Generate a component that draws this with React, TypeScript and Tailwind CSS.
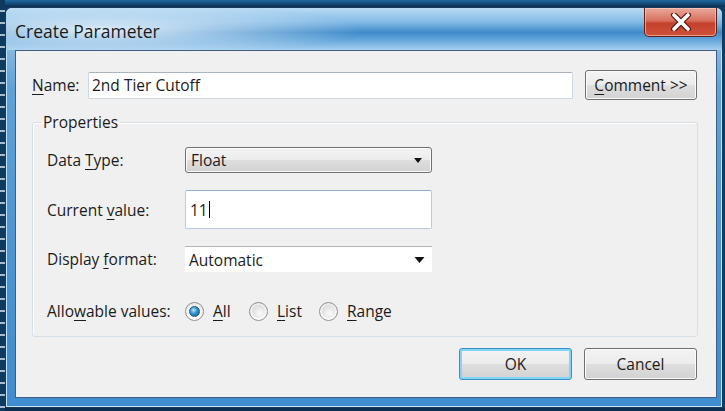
import React from "react";

// ─── Small pieces ──────────────────────────────────────────────────────────────

function U({ children }: { children: React.ReactNode }) {
  return <span className="underline decoration-1 underline-offset-[3px]">{children}</span>;
}

const btn =
  "rounded-[3px] border border-[#707070] bg-[linear-gradient(to_bottom,#f3f3f3_0%,#ececec_48%,#dedede_52%,#d2d2d2_100%)] shadow-[inset_0_0_0_1px_#fbfbfb]";

function Radio({ checked }: { checked?: boolean }) {
  return (
    <span className="w-[19px] h-[19px] rounded-full border border-[#8f9191] bg-[linear-gradient(to_bottom,#e9e9e9,#fefefe)] flex items-center justify-center shrink-0">
      {checked ? (
        <span className="w-[11px] h-[11px] rounded-full border border-[#1f5a85] bg-[radial-gradient(circle_at_40%_35%,#bfe7fb_0%,#3d9bd6_40%,#0b4a7c_100%)]" />
      ) : (
        <span className="w-[13px] h-[13px] rounded-full bg-[radial-gradient(circle_at_60%_65%,#fbfbfb_0%,#dedede_70%,#cfcfcf_100%)]" />
      )}
    </span>
  );
}

function CaretDown({ w = 8, h = 5 }: { w?: number; h?: number }) {
  return (
    <svg width={w} height={h} viewBox="0 0 10 6">
      <polygon points="0,0 10,0 5,6" fill="#111" />
    </svg>
  );
}

function CloseGlyph() {
  return (
    <svg width="22" height="18" viewBox="0 0 22 18">
      <path d="M4 2 L18 16 M18 2 L4 16" stroke="#5a1a12" strokeWidth="6" strokeLinecap="round" />
      <path d="M4 2 L18 16 M18 2 L4 16" stroke="#ffffff" strokeWidth="3.6" strokeLinecap="round" />
    </svg>
  );
}

// ─── Main ──────────────────────────────────────────────────────────────────────

export default function App() {
  return (
    <div className="w-[725px] h-[411px] overflow-hidden flex bg-[#0f3c63] text-[#1b1b1b] font-['Open_Sans','Liberation_Sans',sans-serif]">
      {/* desktop edge behind the window */}
      <div className="w-[5px] h-full bg-[repeating-linear-gradient(to_bottom,#0e3a60_0px,#0e3a60_10px,#a9bccd_10px,#a9bccd_12px)]" />

      <div className="flex flex-col">
        <div className="h-[7px] w-[720px] bg-[linear-gradient(to_bottom,#1d6aa1,#0c2e50)]" />

        {/* ── Window ── */}
        <div className="w-[718px] h-[401px] rounded-t-[7px] border border-[#17395a] bg-[linear-gradient(to_bottom,#a9cfee,#5fa2d9_20%,#4b95d3_60%,#3f8dcf_100%)] shadow-[inset_0_0_0_1px_#c9e2f6] flex flex-col">
          {/* Title bar */}
          <div className="h-[42px] flex items-start rounded-t-[6px] bg-[radial-gradient(ellipse_260px_26px_at_95px_22px,rgba(228,240,250,0.97),rgba(228,240,250,0)),linear-gradient(to_bottom,#b9dbf4,#86bce6_32%,#3f8bca_58%,#5ea3d9_74%,#a7cfef)]">
            <span className="pl-[9px] pt-[12px] text-[17.5px] leading-[23px] text-[#1a1a1a]">Create Parameter</span>
            <div className="ml-auto mr-[5px] w-[73px] h-[29px] rounded-b-[5px] border border-t-0 border-[#5e1f17] bg-[linear-gradient(to_bottom,#e9a99c_0%,#d7705e_45%,#c4412c_55%,#d0523a_100%)] shadow-[inset_0_0_0_1px_rgba(255,210,200,0.6)] flex items-center justify-center">
              <CloseGlyph />
            </div>
          </div>

          {/* Client area */}
          <div className="ml-[9px] w-[702px] h-[348px] border border-[#3e5f7f] bg-[#f0f0f0] text-[15.5px] leading-[20px]">
            {/* Name row */}
            <div className="mt-[19px] h-[30px] pl-[16px] flex items-center">
              <span className="w-[56px]">
                <U>N</U>ame:
              </span>
              <div className="w-[485px] h-[27px] rounded-[2px] border border-[#cfd8e0] border-t-[#abb4bd] bg-white pl-[3px] flex items-center">
                2nd Tier Cutoff
              </div>
              <div className={`ml-[12px] w-[112px] h-[30px] flex items-center justify-center ${btn}`}>
                <U>C</U>omment &gt;&gt;
              </div>
            </div>

            {/* Properties group */}
            <fieldset className="mt-[12px] ml-[16px] w-[666px] rounded-[3px] border border-[#d5dfe5] shadow-[inset_1px_1px_0_#ffffff] px-0 pb-[12px]">
              <legend className="ml-[8px] px-[2px] leading-[20px]">Properties</legend>

              <div className="pl-[14px] flex flex-col">
                <div className="mt-[15px] h-[26px] flex items-center">
                  <span className="w-[138px]">
                    Data <U>T</U>ype:
                  </span>
                  <div className={`w-[247px] h-[26px] pl-[5px] pr-[9px] flex items-center justify-between ${btn}`}>
                    <span>Float</span>
                    <CaretDown w={8} h={5} />
                  </div>
                </div>

                <div className="mt-[17px] h-[39px] flex items-center">
                  <span className="w-[138px]">
                    Current <U>v</U>alue:
                  </span>
                  <div className="w-[247px] h-[39px] rounded-[2px] border border-[#b8cde2] border-t-[#94b0cc] bg-white pl-[4px] flex items-center">
                    <span>11</span>
                    <span className="ml-[1px] w-[1px] h-[17px] bg-black" />
                  </div>
                </div>

                <div className="mt-[17px] h-[26px] flex items-center">
                  <span className="w-[138px]">
                    Display <U>f</U>ormat:
                  </span>
                  <div className="w-[247px] h-[26px] border-t border-[#b4b4b4] bg-white pl-[4px] pr-[7px] flex items-center justify-between">
                    <span>Automatic</span>
                    <CaretDown w={11} h={6} />
                  </div>
                </div>

                <div className="mt-[26px] h-[26px] flex items-center">
                  <span className="w-[138px]">
                    Allo<U>w</U>able values:
                  </span>
                  <div className="w-[64px] flex items-center gap-[9px]">
                    <Radio checked />
                    <span>
                      <U>A</U>ll
                    </span>
                  </div>
                  <div className="w-[70px] flex items-center gap-[9px]">
                    <Radio />
                    <span>
                      <U>L</U>ist
                    </span>
                  </div>
                  <div className="flex items-center gap-[9px]">
                    <Radio />
                    <span>
                      <U>R</U>ange
                    </span>
                  </div>
                </div>
              </div>
            </fieldset>

            {/* Buttons */}
            <div className="mt-[11px] pr-[19px] flex justify-end gap-[12px]">
              <div className="w-[113px] h-[32px] rounded-[3px] border border-[#3a8fc4] bg-[linear-gradient(to_bottom,#f3f3f3_0%,#ececec_48%,#dedede_52%,#d2d2d2_100%)] shadow-[inset_0_0_0_2px_#7fd6f6] flex items-center justify-center">
                OK
              </div>
              <div className={`w-[113px] h-[32px] flex items-center justify-center ${btn}`}>Cancel</div>
            </div>
          </div>
        </div>

        <div className="h-[3px] bg-[#0c2e50]" />
      </div>
    </div>
  );
}
